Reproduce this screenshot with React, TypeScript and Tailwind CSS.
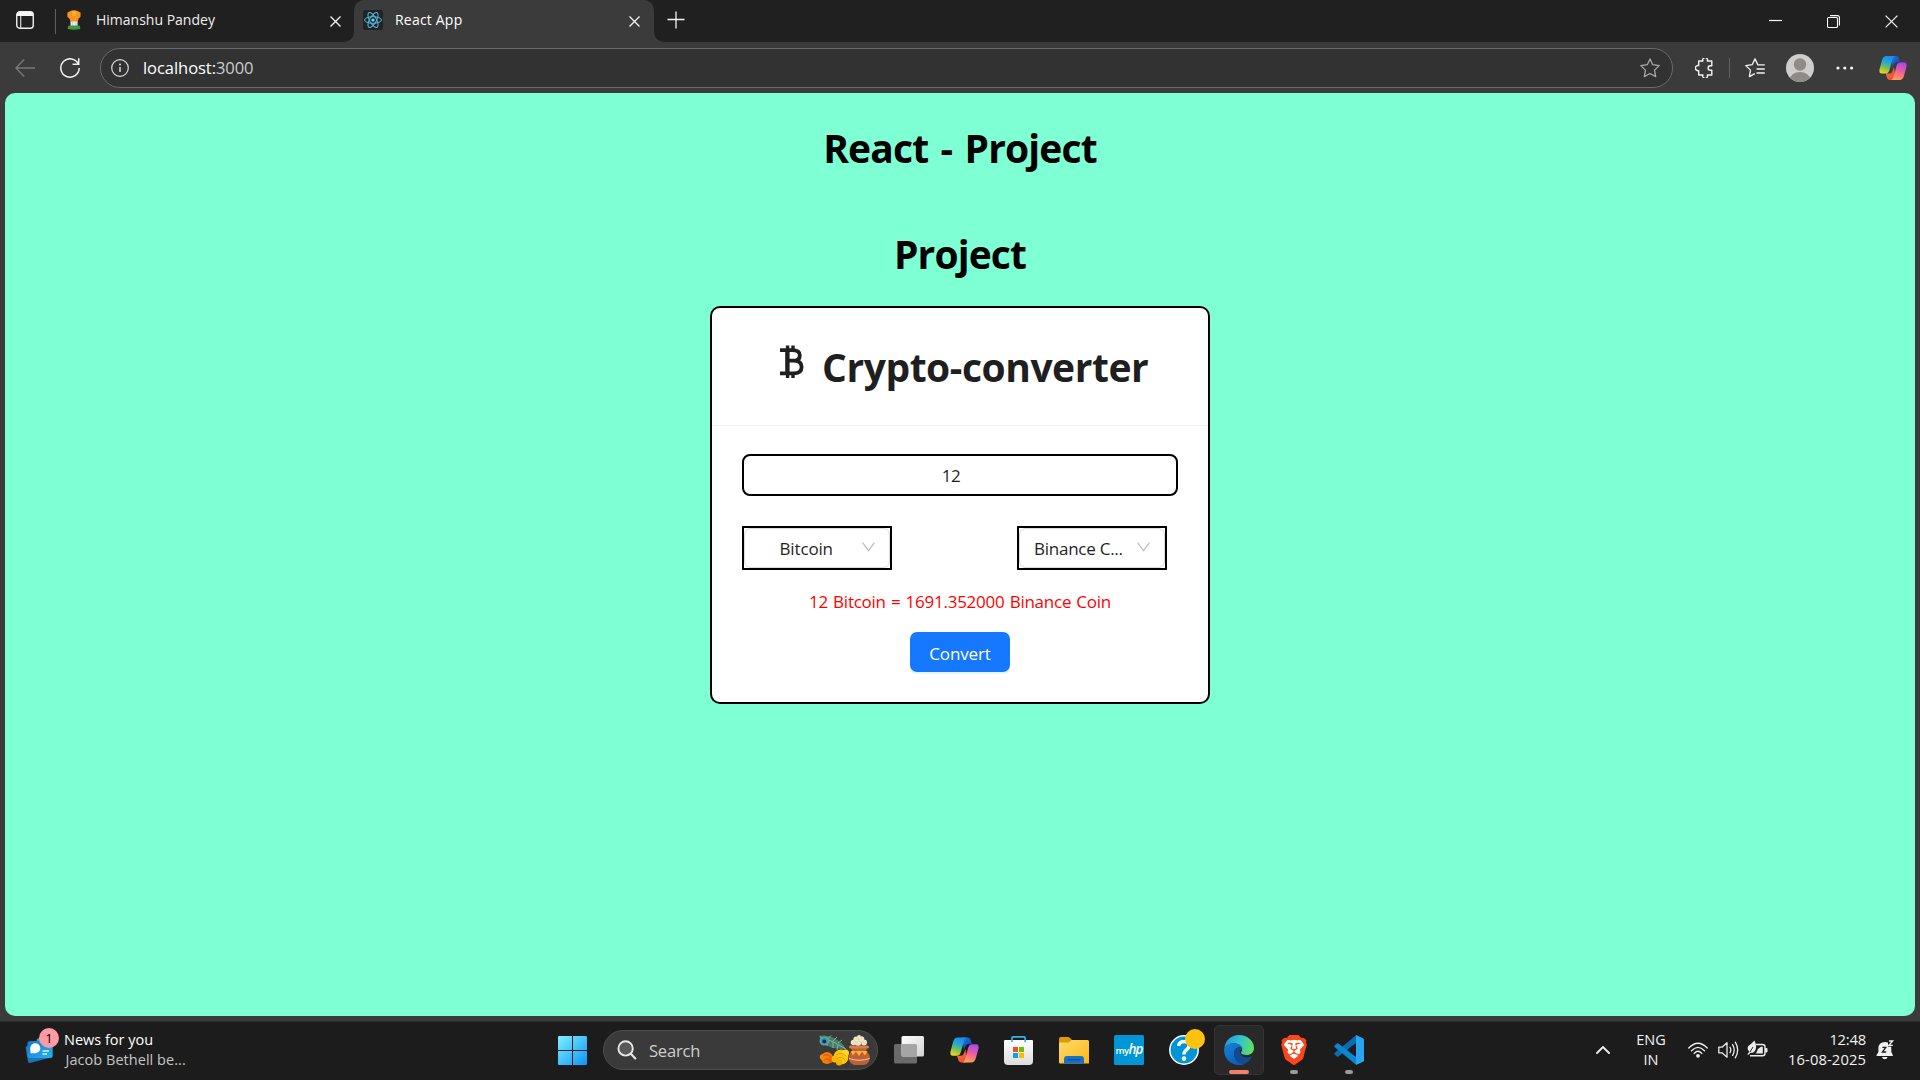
import React from "react";
import { SiBrave } from "react-icons/si";

function CloseIcon({ size = 11, w = 1.4 }: { size?: number; w?: number }) {
  return (
    <svg width={size} height={size} viewBox="0 0 11 11" fill="none" stroke="#f0f0f0" strokeWidth={w}>
      <path d="M0.5 0.5 L10.5 10.5 M10.5 0.5 L0.5 10.5" />
    </svg>
  );
}

function Copilot({ width, height }: { width: number; height: number }) {
  return (
    <svg width={width} height={height} viewBox="0 0 29 26">
      <defs>
        <linearGradient id="cpA" x1="0.6" y1="0" x2="0.3" y2="1">
          <stop offset="0" stopColor="#1b8cf0" />
          <stop offset="0.35" stopColor="#22a7d8" />
          <stop offset="0.65" stopColor="#6fc05a" />
          <stop offset="1" stopColor="#f6d21c" />
        </linearGradient>
        <linearGradient id="cpB" x1="0.6" y1="0" x2="0.3" y2="1">
          <stop offset="0" stopColor="#a64be8" />
          <stop offset="0.45" stopColor="#ee5aa0" />
          <stop offset="1" stopColor="#ffa64a" />
        </linearGradient>
        <linearGradient id="cpC" x1="0" y1="0" x2="1" y2="1">
          <stop offset="0" stopColor="#1a7fe0" />
          <stop offset="1" stopColor="#1733b8" />
        </linearGradient>
        <linearGradient id="cpD" x1="0" y1="0" x2="1" y2="1">
          <stop offset="0" stopColor="#f6802c" />
          <stop offset="1" stopColor="#ee3f45" />
        </linearGradient>
      </defs>
      <path d="M12 0.5 H17.5 C19.5 0.5 20.3 1.7 20.8 3.4 L21.8 7 H18.5 C16.5 7 15.6 8 15 10 L14 13 Z" fill="url(#cpC)" />
      <path d="M17 25.5 H11.5 C9.5 25.5 8.7 24.3 8.2 22.6 L7 18.7 H10.5 C12.5 18.7 13.4 18 14 16 L15.5 12 Z" fill="url(#cpD)" />
      <path d="M7.8 0.5 H17 C15.4 0.5 14.6 2 14 4 L11 14.5 C10.2 17.3 9.2 18.8 6.4 18.8 H3 C0.6 18.8 0 16.8 0.5 14.5 L3 5.2 C3.8 2.2 5 0.5 7.8 0.5 Z" fill="url(#cpA)" />
      <path d="M21.2 25.5 H12 C13.6 25.5 14.4 24 15 22 L18 11.5 C18.8 8.7 19.8 7.2 22.6 7.2 H26 C28.4 7.2 29 9.2 28.5 11.5 L26 20.8 C25.2 23.8 24 25.5 21.2 25.5 Z" fill="url(#cpB)" />
    </svg>
  );
}

function TabStrip() {
  return (
    <div className="flex h-[42px] bg-[#3b3b3b]">
      <div className="flex w-[354px] items-center rounded-br-[10px] bg-[#202020] pl-4">
        <svg className="mb-[2px]" width="18" height="18" viewBox="0 0 18 18" fill="none">
          <rect x="0.75" y="0.75" width="16.5" height="16.5" rx="3" stroke="#f0f0f0" strokeWidth="1.4" />
          <path d="M1 3.5 Q1 1 3.5 1 H14.5 Q17 1 17 3.5 V5 H1 Z" fill="#f5f5f5" />
          <path d="M4.7 5 V17" stroke="#d8d8d8" strokeWidth="1.2" />
        </svg>
        <div className="ml-[21px] h-[25px] w-px bg-[#606060]" />
        <svg className="mb-[2px] ml-[11px]" width="14" height="20" viewBox="0 0 14 20">
          <path d="M2.6 1.6 Q7 -1 11.4 1.6 L13.6 2.5 L13.5 7 L11.6 8.4 L10.5 12 H3.8 L2.4 8.4 L0.4 7 L0.4 2.5 Z" fill="#f8941d" />
          <path d="M5 1.5 Q7 0 9 1.5 V6 H5 Z" fill="#ffac2e" />
          <path d="M3.5 11.5 H10.6 V16 H3.5 Z" fill="#e9edf4" />
          <path d="M5.4 11.5 V16 M8.8 11.5 V16" stroke="#b7c2d4" strokeWidth="0.8" />
          <path d="M1.8 15.5 H12.2 Q13.6 16 13.2 19 Q7 20.5 0.8 19 Q0.4 16 1.8 15.5 Z" fill="#3d9b3f" />
        </svg>
        <span className="ml-[15px] w-[234px] pb-[3px] text-[14px] leading-5 text-[#eeeeee]">Himanshu Pandey</span>
        <CloseIcon />
      </div>
      <div className="w-[300px] bg-[linear-gradient(#202020_20px,#3b3b3b_20px)]">
        <div className="flex h-full items-center rounded-t-[10px] bg-[#3b3b3b] pl-[9px]">
          <svg className="mb-[2px]" width="20" height="20" viewBox="0 0 20 20" fill="none" stroke="#58bcd8" strokeWidth="1">
            <rect width="20" height="20" rx="2" fill="#20232a" stroke="none" />
            <ellipse cx="10" cy="10" rx="8.4" ry="3.3" />
            <ellipse cx="10" cy="10" rx="8.4" ry="3.3" transform="rotate(60 10 10)" />
            <ellipse cx="10" cy="10" rx="8.4" ry="3.3" transform="rotate(120 10 10)" />
            <circle cx="10" cy="10" r="1.6" fill="#61dafb" stroke="none" />
          </svg>
          <span className="ml-3 w-[234px] pb-[3px] text-[14px] leading-5 tracking-[0.2px] text-white">React App</span>
          <CloseIcon />
        </div>
      </div>
      <div className="flex flex-1 items-start rounded-bl-[10px] bg-[#202020]">
        <svg className="mt-[11px] ml-[12.5px]" width="18" height="18" viewBox="0 0 18 18" stroke="#f5f5f5" strokeWidth="1.3">
          <path d="M9 0.5 V17.5 M0.5 8.5 H17.5" />
        </svg>
        <div className="flex-1" />
        <div className="mt-[15px] mr-[22px] flex gap-[45px]">
          <svg width="13" height="13" viewBox="0 0 13 13">
            <path d="M0 5.5 H13" stroke="#ffffff" strokeWidth="1.2" />
          </svg>
          <svg width="13" height="13" viewBox="0 0 13 13" fill="none" stroke="#ffffff" strokeWidth="1.1">
            <rect x="0.5" y="2.5" width="10" height="10" rx="1.2" />
            <path d="M3 0.6 H10.4 Q12.4 0.6 12.4 2.6 V10.4" />
          </svg>
          <CloseIcon size={13} w={1.1} />
        </div>
      </div>
    </div>
  );
}

function Toolbar() {
  return (
    <div className="flex h-[51px] items-center bg-[#3b3b3b] pl-[15px]">
      <svg width="20" height="18" viewBox="0 0 20 18" fill="none" stroke="#7a7a7a" strokeWidth="1.3">
        <path d="M20 9 H0.9 M9.3 0.5 L0.8 9 L9.3 17.5" />
      </svg>
      <svg className="ml-[25px]" width="20" height="20" viewBox="0 0 20 20" fill="none" stroke="#f5f5f5" strokeWidth="1.5">
        <path d="M18.4 6.2 A9.2 9.2 0 1 0 19.2 10" />
        <path d="M18.7 0.3 V6.2 H12.6" />
      </svg>
      <div className="ml-5 flex h-10 w-[1573px] items-center rounded-full border border-[#6a6a6a] bg-[#323232] pr-3 pl-[10px]">
        <svg width="18" height="18" viewBox="0 0 18 18" fill="none" stroke="#dcdcdc" strokeWidth="1.2">
          <circle cx="9" cy="9" r="8.3" />
          <path d="M9 8 V13" strokeWidth="1.5" />
          <circle cx="9" cy="5.4" r="1" fill="#dcdcdc" stroke="none" />
        </svg>
        <span className="ml-[14px] flex-1 text-[16.5px] leading-6 tracking-[-0.05px] text-white">
          localhost:<span className="text-[#cccccc]">3000</span>
        </span>
        <svg width="20" height="20" viewBox="0 0 20 20" fill="none" stroke="#a8a8a8" strokeWidth="1.3" strokeLinejoin="round">
          <path d="M10 0.9 L12.7 6.7 L19.2 7.6 L14.5 12.1 L15.7 18.6 L10 15.5 L4.3 18.6 L5.5 12.1 L0.8 7.6 L7.3 6.7 Z" />
        </svg>
      </div>
      <svg className="ml-[22px]" width="19" height="20" viewBox="0 0 19 20" fill="none" stroke="#f2f2f2" strokeWidth="1.4" strokeLinejoin="round">
        <path d="M3.7 3 H7.9 A2.4 2.4 0 1 1 12.3 3 H16.8 V7.7 H15.4 A2.3 2.3 0 0 0 15.4 12.3 H16.8 V17 H12.3 A2.4 2.4 0 1 1 7.9 17 H3.7 V12.6 A2.6 2.6 0 1 1 3.7 7.6 Z" />
      </svg>
      <div className="ml-[15px] h-5 w-px bg-[#606060]" />
      <svg className="ml-[15px]" width="20" height="20" viewBox="0 0 20 20" fill="none" stroke="#f2f2f2" strokeWidth="1.3" strokeLinejoin="round" strokeLinecap="round">
        <path d="M19.3 6.9 H12.9 L10 0.9 L7.2 6.7 L0.8 7.6 L5.5 12.1 L4.4 18.6 L9.4 15.9" />
        <path d="M12 11 H19.3 M12 15 H19.3" />
      </svg>
      <svg className="ml-[21px]" width="28" height="28" viewBox="0 0 28 28">
        <defs>
          <clipPath id="avatarClip"><circle cx="14" cy="14" r="14" /></clipPath>
        </defs>
        <g clipPath="url(#avatarClip)">
          <rect width="28" height="28" fill="#d0cecb" />
          <circle cx="14" cy="10.5" r="6.2" fill="#8f8b87" />
          <ellipse cx="14" cy="26" rx="10.3" ry="8" fill="#8f8b87" />
        </g>
      </svg>
      <svg className="ml-[22px]" width="18" height="4" viewBox="0 0 18 4" fill="#f5f5f5">
        <circle cx="2" cy="2" r="1.6" />
        <circle cx="8.8" cy="2" r="1.6" />
        <circle cx="15.6" cy="2" r="1.6" />
      </svg>
      <div className="ml-[25px]"><Copilot width={28} height={26} /></div>
    </div>
  );
}

function CoinSelect({ label, padding }: { label: string; padding: string }) {
  return (
    <div className="h-11 w-[150px] border-2 border-black">
      <div className={"flex h-full items-center rounded-[7px] border border-[#d9d9d9] " + padding}>
        <span className="flex-1 pt-px text-[17px] leading-6 whitespace-nowrap text-[#1f1f1f]">{label}</span>
        <svg className="mr-[14px] mb-[3px]" width="13" height="10" viewBox="0 0 13 10" fill="none" stroke="#bfbfbf" strokeWidth="1.3">
          <path d="M0.6 0.6 L6.5 8.6 L12.4 0.6" />
        </svg>
      </div>
    </div>
  );
}

function Page() {
  return (
    <div className="h-[928px] bg-[#3b3b3b] px-[5px] pb-[5.5px]">
      <div className="flex h-full flex-col items-center rounded-[10px] bg-[#7fffd4] pt-[28px]">
        <h1 className="h-[54px] text-[39px] leading-[54px] font-bold tracking-[-0.85px] [word-spacing:3px] text-black">React - Project</h1>
        <h1 className="mt-[52px] h-[54px] text-[39px] leading-[54px] font-bold tracking-[-0.9px] text-black">Project</h1>
        <div className="mt-[25px] flex h-[398px] w-[500px] flex-col rounded-[10px] border-2 border-black bg-white">
          <div className="flex h-[118px] items-center border-b border-[#f0f0f0] pl-[68px]">
            <svg className="mt-[-9px]" width="24" height="34" viewBox="0 0 24 34" fill="none" stroke="#1f1f1f">
              <path d="M0 5.2 H12 C17.6 5.2 19.8 7.2 19.8 10.4 C19.8 13.6 17.6 15.7 13 15.7 H8 M13 15.7 C19 15.7 21.6 18.2 21.6 22 C21.6 26 19 28.4 13.5 28.4 H0" strokeWidth="3.8" />
              <path d="M7.4 4 V30" strokeWidth="4.4" />
              <path d="M7.6 0.6 V5 M13 0.6 V5 M7.6 28 V33 M13 28 V33" strokeWidth="3.4" />
            </svg>
            <h1 className="ml-[18px] text-[39px] leading-[54px] font-bold tracking-[-0.45px] text-[#1f1f1f]">Crypto-converter</h1>
          </div>
          <div className="flex flex-1 flex-col px-[30px] pt-[28px]">
            <div className="flex h-[42px] items-center justify-center rounded-[8px] border-2 border-black pt-px pr-[18px] text-[17px] leading-6 tracking-[-0.4px] text-[#1f1f1f]">12</div>
            <div className="mt-[30px] flex gap-[125px]">
              <CoinSelect label="Bitcoin" padding="pl-[34.5px] tracking-[-0.15px]" />
              <CoinSelect label="Binance C..." padding="pl-[14px] tracking-[-0.25px]" />
            </div>
            <p className="mt-[20px] h-6 text-center text-[17px] leading-6 tracking-[-0.25px] [word-spacing:1px] text-[#ff0000]">12 Bitcoin = 1691.352000 Binance Coin</p>
            <button className="mt-[18px] h-10 w-[100px] self-center rounded-[7px] bg-[#1677ff] pt-[3px] text-[17px] leading-6 tracking-[-0.13px] text-white shadow-[0_2px_0_rgba(5,145,255,0.1)]">Convert</button>
          </div>
        </div>
      </div>
    </div>
  );
}

function TaskIcon({ children, bar }: { children: React.ReactNode; bar?: boolean }) {
  return (
    <div className="flex h-[58px] w-[55px] flex-col items-start pt-[13px]">
      <div className="ml-3 size-[30px]">{children}</div>
      {bar && <div className="mt-[5px] ml-[23px] h-1 w-2 rounded-full bg-[#9a9a9a]" />}
    </div>
  );
}

function FestivalArt() {
  return (
    <svg width="53" height="31" viewBox="0 0 53 31">
      <path d="M1 1 C8 -1 22 3 28 14 C20 14 6 14 1 1 Z" fill="#3f7f78" />
      <path d="M2 2 Q14 5 28 14 M10 4 L13 0.5 M15 6 L19 2 M20 8 L24 5 M10 5 L9 11 M15 7 L15 13 M20 10 L19 15" stroke="#9bb58a" strokeWidth="0.9" fill="none" />
      <ellipse cx="6.5" cy="6" rx="5" ry="4.5" fill="#6fa377" />
      <circle cx="6.3" cy="6" r="3.2" fill="#1d9cc4" />
      <circle cx="6.3" cy="6.3" r="1.9" fill="#151f86" />
      <circle cx="9" cy="23" r="6" fill="#f57c00" />
      <circle cx="4.5" cy="22" r="2.7" fill="#f98a0c" />
      <circle cx="13" cy="25" r="2.7" fill="#e96500" />
      <path d="M5 21 Q9 18 13 22 M6 25 Q9 22 12 26" stroke="#d95300" strokeWidth="0.9" fill="none" />
      <circle cx="23" cy="22" r="7.5" fill="#fdc70c" />
      <circle cx="17" cy="24" r="3.4" fill="#f9b806" />
      <circle cx="21" cy="27.5" r="3" fill="#f7b300" />
      <circle cx="27.5" cy="18" r="3.5" fill="#ffd52b" />
      <path d="M18 20 Q23 16 28 21 M19 24 Q23 20 27 25" stroke="#e49b00" strokeWidth="0.9" fill="none" />
      <path d="M33 13 H49 L48 16 Q52 19 52 23 Q51 29 46 30 H36 Q31 28 30.5 23 Q30.5 19 34 16 Z" fill="#bd6038" />
      <path d="M32.5 12 H49.5" stroke="#d97a4e" strokeWidth="3" strokeLinecap="round" />
      <path d="M32.5 16 H49.5 L47 20.5 L44 16.5 L41 21 L38 16.5 L35 20.5 Z" fill="#f7b52d" />
      <path d="M31 23.5 Q41 27 51.5 23.5" stroke="#f3c9a0" strokeWidth="1" fill="none" />
      <g fill="#efe3c4">
        <circle cx="35.5" cy="7.5" r="2.8" /><circle cx="40" cy="7.5" r="3.2" /><circle cx="46" cy="7.5" r="3" />
        <circle cx="38" cy="4" r="2.6" /><circle cx="43.5" cy="4" r="2.8" /><circle cx="41" cy="2" r="2" />
      </g>
      <path d="M35 8 Q37 5 39 8 Q41 5 43 8 Q45 5 47 8" stroke="#d9caa2" strokeWidth="0.7" fill="none" />
    </svg>
  );
}

function Taskbar() {
  return (
    <div className="flex h-[59px] border-t border-[#2b2b2b] bg-[#1c1c1c]">
      <div className="flex w-[558px] pt-[6px] pl-[25px]">
        <div className="relative mt-[8px] h-7 w-[28px]">
          <svg width="28" height="28" viewBox="0 0 28 28">
            <defs>
              <linearGradient id="news" x1="0" y1="0" x2="1" y2="1">
                <stop offset="0" stopColor="#1477d4" />
                <stop offset="1" stopColor="#27b2ea" />
              </linearGradient>
            </defs>
            <path d="M12 3 L18 0 V10 H11 Z" fill="#3fae62" />
            <path d="M0.5 11 L4 9 L24 22 L4.8 27 Q3.5 27 3 25.5 Z" fill="#1b76b8" />
            <rect x="2.5" y="5" width="25.2" height="17" rx="2.5" fill="url(#news)" />
            <circle cx="10.3" cy="12.3" r="5" fill="#ffffff" />
            <path d="M5.5 13 V17.3 H10 Z" fill="#ffffff" />
            <path d="M17.5 15 H24 M17.5 18 H22" stroke="#d8f0fb" strokeWidth="1.4" />
          </svg>
          <span className="absolute top-[-8px] left-[14px] flex size-5 items-center justify-center rounded-full bg-[#ff99a4] text-[13px] leading-5 text-black">1</span>
        </div>
        <div className="mt-[2px] ml-[11px] text-[14.5px] leading-5 text-white">
          <div>News for you</div>
          <div className="tracking-[0.04px] text-[#c4c4c4]"><span className="ml-[1.5px]">Jacob Bethell be...</span></div>
        </div>
      </div>

      <svg className="mt-[14px]" width="29" height="29" viewBox="0 0 29 29">
        <defs>
          <linearGradient id="win" gradientUnits="userSpaceOnUse" x1="0" y1="0" x2="29" y2="29">
            <stop offset="0" stopColor="#7df0ff" />
            <stop offset="0.5" stopColor="#45c3fb" />
            <stop offset="1" stopColor="#0e94f5" />
          </linearGradient>
        </defs>
        <g fill="url(#win)">
          <path d="M1 0 H14 V14 H0 V1 Q0 0 1 0 Z" />
          <path d="M15 0 H28 Q29 0 29 1 V14 H15 Z" />
          <path d="M0 15 H14 V29 H1 Q0 29 0 28 Z" />
          <path d="M15 15 H29 V28 Q29 29 28 29 H15 Z" />
        </g>
      </svg>

      <div className="mt-2 ml-4 flex h-10 w-[275px] items-center rounded-full border border-[#4e4e4e] bg-[#3a3a3a] pr-[6px] pl-[13px]">
        <svg width="20" height="20" viewBox="0 0 20 20" fill="none" stroke="#e6e6e6" strokeWidth="1.9" strokeLinecap="round">
          <circle cx="8.6" cy="8.4" r="7.2" fill="#585858" />
          <path d="M13.8 13.8 L18.3 18.4" strokeWidth="2.2" />
        </svg>
        <span className="ml-[12px] flex-1 pt-px text-[16.5px] leading-6 tracking-[-0.2px] text-[#cfcfcf]">Search</span>
        <FestivalArt />
      </div>

      <div className="ml-1 flex">
        <TaskIcon>
          <svg width="30" height="30" viewBox="0 0 30 30">
            <defs>
              <linearGradient id="tv" x1="0" y1="0" x2="1" y2="1"><stop offset="0" stopColor="#ffffff" /><stop offset="1" stopColor="#d2d2d2" /></linearGradient>
            </defs>
            <rect x="0" y="9" width="23" height="19.5" rx="1.5" fill="#6a6a6a" />
            <rect x="7.5" y="1" width="22.5" height="20.5" rx="1.5" fill="url(#tv)" />
            <path d="M7.5 9 H21.5 Q23 9 23 10.5 V21.5 H9 Q7.5 21.5 7.5 20 Z" fill="#a5a5a5" />
          </svg>
        </TaskIcon>
        <TaskIcon><div className="pt-[2px] pl-px"><Copilot width={29} height={26} /></div></TaskIcon>
        <TaskIcon>
          <svg width="30" height="30" viewBox="0 0 30 30">
            <defs>
              <linearGradient id="st" x1="0" y1="0" x2="0" y2="1"><stop offset="0" stopColor="#ffffff" /><stop offset="1" stopColor="#dcdcdc" /></linearGradient>
            </defs>
            <path d="M0 6 Q0 5 1 5 H28 Q29 5 29 6 V26 Q29 30 25 30 H4 Q0 30 0 26 Z" fill="url(#st)" />
            <path d="M8 7 V3 Q8 1.8 9.2 1.8 H20 Q21.2 1.8 21.2 3 V7" stroke="#2cb5ee" strokeWidth="1.7" fill="none" />
            <path d="M9 12 H14 V17 H9 Z" fill="#f25022" />
            <path d="M15 12 H20 V17 H15 Z" fill="#7fba00" />
            <path d="M9 18 H14 V23 H9 Z" fill="#00a4ef" />
            <path d="M15 18 H20 V23 H15 Z" fill="#ffb900" />
          </svg>
        </TaskIcon>
        <TaskIcon>
          <svg width="30" height="30" viewBox="0 0 30 30">
            <defs>
              <linearGradient id="fo" x1="0" y1="0" x2="1" y2="1"><stop offset="0" stopColor="#ffdb6b" /><stop offset="1" stopColor="#fcb714" /></linearGradient>
            </defs>
            <path d="M0 4 Q0 2 2 2 H9 Q10 2 11 3 L13.5 5.5 L11 9 H0 Z" fill="#dc9c08" />
            <path d="M0 7.5 H9 Q10 7.5 11 6.5 L12.5 5 H28.5 Q30 5 30 6.5 V28.5 H1 Q0 28.5 0 27.5 Z" fill="url(#fo)" />
            <path d="M5 28.5 V24 Q5 21 8 21 H22 Q25 21 25 24 V28.5 Z" fill="#1672c8" />
            <path d="M8.5 24.8 H21.5" stroke="#0c4f93" strokeWidth="1.2" />
          </svg>
        </TaskIcon>
        <TaskIcon>
          <div className="flex size-[30px] items-center justify-center rounded-[1.5px] bg-[#0096d6] pb-px leading-none tracking-[-0.6px] text-white">
            <span className="pt-[2px] text-[9.5px] font-semibold">my</span>
            <span className="text-[13.5px] font-semibold tracking-[-1px] italic">hp</span>
          </div>
        </TaskIcon>
        <TaskIcon>
          <svg className="overflow-visible" width="30" height="30" viewBox="0 0 30 30">
            <circle cx="15" cy="15" r="14.2" fill="#0096d6" stroke="#ffffff" strokeWidth="1.5" />
            <path d="M9.7 11 Q10 6.6 15 6.6 Q20 6.6 20 10.6 Q20 13 17.4 14.8 Q15 16.5 15 19.5" stroke="#ffffff" strokeWidth="3.4" fill="none" />
            <circle cx="15" cy="23.6" r="2.3" fill="#ffffff" />
            <circle cx="26" cy="4" r="10" fill="#ffc20e" />
          </svg>
        </TaskIcon>
        <div className="mt-[3px] mr-[3px] ml-[2px] h-[50px] w-[50px] rounded-[5px] border border-[#343434] bg-[#292929] pt-[9px] pl-[9px]">
          <svg width="30" height="30" viewBox="0 0 30 30">
            <defs>
              <linearGradient id="e1" x1="0" y1="0.4" x2="1" y2="0.6"><stop offset="0" stopColor="#2698e0" /><stop offset="0.5" stopColor="#32c4cc" /><stop offset="1" stopColor="#62e05a" /></linearGradient>
              <linearGradient id="e2" x1="0" y1="0" x2="0.6" y2="1"><stop offset="0" stopColor="#1583d8" /><stop offset="1" stopColor="#0b5fb8" /></linearGradient>
            </defs>
            <path d="M0.3 13 C1.5 5 7.5 0 15 0 C23.5 0 30 6 30 13 C30 17.5 26.5 20 22.5 20 C19 20 17 18.8 17 17.8 C17 17 18.2 16.3 18.2 14 C18 10.5 14 8.2 10 8.2 C5.5 8.2 1.8 10.5 0.3 13 Z" fill="url(#e1)" />
            <path d="M0.2 13.5 C1.8 10 5.5 8.2 9.5 8.2 C14 8.2 18 10.5 18.2 13.8 C16 10.8 11 12.5 10.2 17.5 C9.5 23.5 14 28.5 20.5 28.9 C18.8 29.7 17 30 15 30 C6 30 -0.8 22.5 0.2 13.5 Z" fill="url(#e2)" />
            <path d="M10.2 17.5 C10.6 13.5 15.5 11.3 18.2 14 C15.5 14.3 15.4 16.6 16.2 18.6 C18 22.6 23.5 23.6 27.2 21.4 Q28.4 20.8 27.8 22 C26.3 25.3 23.8 27.6 20.5 28.9 C13.5 28.5 9.6 23 10.2 17.5 Z" fill="#124b93" />
          </svg>
          <div className="mt-[5px] ml-[5px] h-1 w-5 rounded-full bg-[#f08068]" />
        </div>
        <TaskIcon bar>
          <div className="relative size-[30px]">
            <svg width="30" height="30" viewBox="0 0 30 30">
              <path d="M8 4.5 H22 L25.5 9 V14 L22 21 L15 25 L8 21 L4.5 14 V9 Z" fill="#ffffff" />
            </svg>
            <SiBrave className="absolute top-0 left-0 size-[30px] text-[#fb4619]" />
          </div>
        </TaskIcon>
        <TaskIcon bar>
          <svg width="30" height="30" viewBox="0 0 30 30">
            <path d="M0.6 19.6 L2.8 21.5 Q3.6 22 4.4 21.4 L22 8 V0.2 L0.6 18 Q-0.2 18.8 0.6 19.6 Z" fill="#0a6cb0" />
            <path d="M0.6 10.4 L2.8 8.5 Q3.6 8 4.4 8.6 L22 22 V29.8 L0.6 12 Q-0.2 11.2 0.6 10.4 Z" fill="#0b86d1" />
            <path d="M22 0 L29 3.2 Q30 3.7 30 4.8 V25.2 Q30 26.3 29 26.8 L22 30 Z" fill="#27a5f2" />
          </svg>
        </TaskIcon>
      </div>

      <div className="ml-[219px] flex">
        <svg className="mt-[24px]" width="14" height="8" viewBox="0 0 14 8" fill="none" stroke="#f2f2f2" strokeWidth="1.8" strokeLinecap="round">
          <path d="M1 7 L7 1 L13 7" />
        </svg>
        <div className="mt-2 ml-[21px] w-10 text-center text-[14.5px] leading-5 text-[#f2f2f2]">
          <div>ENG</div>
          <div>IN</div>
        </div>
        <svg className="mt-[20px] ml-[17px]" width="20" height="16" viewBox="0 0 20 16" fill="none" stroke="#ececec" strokeWidth="1.4" strokeLinecap="round">
          <path d="M0.8 6 Q10 -3.6 19.2 6 M3.5 8.8 Q10 2 16.5 8.8 M6.2 11.4 Q10 7.2 13.8 11.4" />
          <circle cx="10" cy="13.8" r="1.9" fill="#ececec" stroke="none" />
        </svg>
        <svg className="mt-[19px] ml-[10px]" width="21" height="18" viewBox="0 0 21 18" fill="none" stroke="#ececec" strokeWidth="1.3" strokeLinecap="round" strokeLinejoin="round">
          <path d="M0.8 6.2 H4 L9 1.8 V16.2 L4 11.8 H0.8 Z" />
          <path d="M12 6.2 Q13.6 9 12 11.8 M14.6 3.6 Q17.8 9 14.6 14.4 M17.3 1.2 Q22 9 17.3 16.8" />
        </svg>
        <svg className="mt-[18px] ml-[8px]" width="21" height="19" viewBox="0 0 21 19">
          <path d="M9 4.5 H15.5 Q18 4.5 18 7 V13.2 Q18 15.7 15.5 15.7 H3" stroke="#ececec" strokeWidth="1.4" fill="none" />
          <rect x="18" y="8" width="2.5" height="4.4" rx="1" fill="#ececec" />
          <path d="M8.5 14.4 L11 9 L14 6.8 H15.8 V13.6 H8.5 Z" fill="#ececec" />
          <path d="M7.5 0.5 Q10 6 8.6 9.5 Q7.2 13.2 3.6 12.8 L1.2 15 L0.4 14 L2.4 12 Q-0.8 8.6 1.6 5.8 Q4 4.2 7.5 0.5 Z" fill="#ececec" />
          <path d="M3 12 L6 7" stroke="#1c1c1c" strokeWidth="0.9" />
        </svg>
        <div className="mt-[7px] ml-3 w-[86px] text-right text-[14.75px] leading-5 text-[#f2f2f2]">
          <div className="tracking-[-0.2px]">12:48</div>
          <div className="tracking-[0.1px]">16-08-2025</div>
        </div>
        <svg className="mt-[18px] ml-[10px]" width="19" height="20" viewBox="0 0 19 20" fill="none">
          <path d="M9 2 Q15.3 2 15.3 8.5 V12 L16.8 15 V16 H0.6 V15 L2.4 12 V8.5 Q2.4 2 9 2 Z" fill="#f0f0f0" />
          <path d="M6 17 H11.6 Q11 19.3 8.8 19.3 Q6.6 19.3 6 17 Z" fill="#f0f0f0" />
          <path d="M6.4 7.4 H9.8 L6.4 12 H10.2" stroke="#1c1c1c" strokeWidth="1.3" />
          <path d="M12 0 H18 V6.6 H12 Z" fill="#1c1c1c" />
          <path d="M13 1 H16.6 L13 5.4 H16.8" stroke="#f0f0f0" strokeWidth="1.4" />
        </svg>
      </div>
    </div>
  );
}

export default function App() {
  return (
    <div className="flex h-[1080px] w-[1920px] flex-col overflow-hidden bg-[#3b3b3b] font-['Open_Sans',sans-serif]">
      <TabStrip />
      <Toolbar />
      <Page />
      <Taskbar />
    </div>
  );
}
